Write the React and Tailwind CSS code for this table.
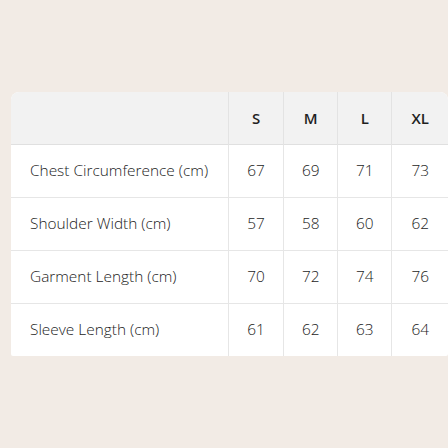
import React from 'react'

const sizes = ['S', 'M', 'L', 'XL']

const rows = [
  { label: 'Chest Circumference (cm)', values: [67, 69, 71, 73] },
  { label: 'Shoulder Width (cm)', values: [57, 58, 60, 62] },
  { label: 'Garment Length (cm)', values: [70, 72, 74, 76] },
  { label: 'Sleeve Length (cm)', values: [61, 62, 63, 64] },
]

const colWidths = ['w-[55px]', 'w-[54px]', 'w-[54px]', 'w-[56px]']

const App = () => {
  return (
    <div
      className="w-[448px] h-[448px] bg-[#f2ebe5] flex items-center"
      style={{ fontFamily: '"Open Sans", "Noto Sans", sans-serif' }}
    >
      <div className="ml-[11px] w-[437px] bg-white rounded-t-[8px] rounded-b-[2px] overflow-hidden">
        <table className="w-full border-collapse table-fixed text-[15.4px] text-[#1c1c1c]">
          <thead>
            <tr className="h-[52px] bg-[#f2f2f2] border-b border-[#e0e0e0]">
              <th className="w-[217px]"></th>
              {sizes.map((s, i) => (
                <th
                  key={s}
                  className={`${colWidths[i]} border-l border-[#e3e3e3] text-[15px] font-semibold text-[#1f1f1f]`}
                >
                  {s}
                </th>
              ))}
            </tr>
          </thead>
          <tbody>
            {rows.map((row, r) => (
              <tr
                key={row.label}
                className={`h-[53px] ${r < rows.length - 1 ? 'border-b border-[#e6e6e6]' : ''}`}
              >
                <td className="pl-[19px] text-left font-light">{row.label}</td>
                {row.values.map((v, i) => (
                  <td key={i} className="border-l border-[#e6e6e6] text-center font-light">
                    {v}
                  </td>
                ))}
              </tr>
            ))}
          </tbody>
        </table>
      </div>
    </div>
  )
}

export default App
